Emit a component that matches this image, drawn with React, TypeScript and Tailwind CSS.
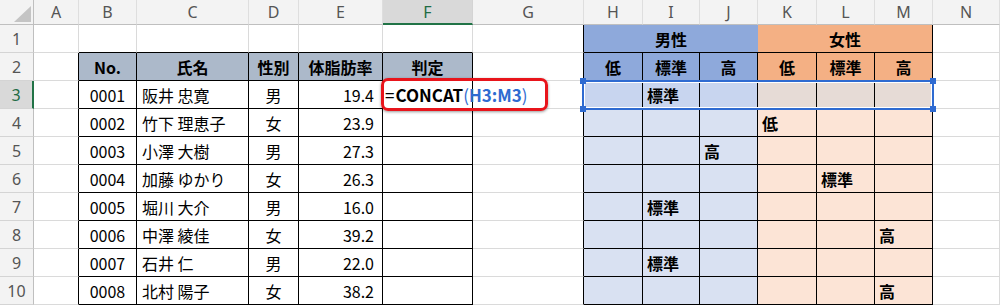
import React from 'react';

const COLS = ['A', 'B', 'C', 'D', 'E', 'F', 'G', 'H', 'I', 'J', 'K', 'L', 'M', 'N'];

// col index of the 判定 mark: H=7 … M=12
const people = [
  { no: '0001', name: '阪井 忠寛', sex: '男', fat: '19.4', col: 8, mark: '標準' },
  { no: '0002', name: '竹下 理恵子', sex: '女', fat: '23.9', col: 10, mark: '低' },
  { no: '0003', name: '小澤 大樹', sex: '男', fat: '27.3', col: 9, mark: '高' },
  { no: '0004', name: '加藤 ゆかり', sex: '女', fat: '26.3', col: 11, mark: '標準' },
  { no: '0005', name: '堀川 大介', sex: '男', fat: '16.0', col: 8, mark: '標準' },
  { no: '0006', name: '中澤 綾佳', sex: '女', fat: '39.2', col: 12, mark: '高' },
  { no: '0007', name: '石井 仁', sex: '男', fat: '22.0', col: 8, mark: '標準' },
  { no: '0008', name: '北村 陽子', sex: '女', fat: '38.2', col: 12, mark: '高' },
];

const tableHead = ['No.', '氏名', '性別', '体脂肪率', '判定'];
const levels = ['低', '標準', '高'];

const blackRight = (r: number, c: number) => {
  if (c <= 5) return r >= 2;
  if (c === 6) return true;
  if (c <= 12) return r >= 2;
  return false;
};
const blackBottom = (c: number) => (c >= 1 && c <= 5) || (c >= 7 && c <= 12);

const fill = (r: number, c: number) => {
  if (r === 2) {
    if (c >= 1 && c <= 5) return 'bg-[#acb9ca]';
    if (c >= 7 && c <= 9) return 'bg-[#8ea9db]';
    if (c >= 10 && c <= 12) return 'bg-[#f4b084]';
  }
  if (r === 3) {
    if (c >= 7 && c <= 9) return 'bg-[#c8d5ef]';
    if (c >= 10 && c <= 12) return 'bg-[#e6dbd6]';
  }
  if (r >= 4) {
    if (c >= 7 && c <= 9) return 'bg-[#d9e1f2]';
    if (c >= 10 && c <= 12) return 'bg-[#fce4d6]';
  }
  return 'bg-white';
};

const align = (r: number, c: number) => {
  if (r === 2) return 'justify-center font-bold';
  if (c === 2) return 'justify-start pl-[5px]';
  if (c === 4) return 'justify-end pr-[8px]';
  if (c === 5) return 'justify-start';
  if (c >= 7) return 'justify-start pl-[4px] font-bold';
  return 'justify-center';
};

function Formula() {
  return (
    <span className="relative z-10 pl-[2px] whitespace-nowrap text-[17px] text-black">
      =<span className="ml-[1px] font-bold">CONCAT</span>
      <span className="text-[#2f6bd1]">(</span>
      <span className="font-bold text-[#2f6bd1]">H3:M3</span>
      <span className="text-[#2f6bd1]">)</span>
    </span>
  );
}

function content(r: number, c: number) {
  if (r === 2) {
    if (c >= 1 && c <= 5) return tableHead[c - 1];
    if (c >= 7 && c <= 12) return levels[(c - 7) % 3];
    return null;
  }
  const p = people[r - 3];
  if (c === 1) return p.no;
  if (c === 2) return p.name;
  if (c === 3) return p.sex;
  if (c === 4) return p.fat;
  if (c === 5 && r === 3) return <Formula />;
  if (c === p.col) return p.mark;
  return null;
}

function RowHeader({ n }: { n: number }) {
  const active = n === 3;
  return (
    <div
      className={
        active
          ? 'flex items-center justify-center border-b border-b-[#d4d4d4] border-r-2 border-r-[#217346] bg-[#d9d9d9] text-[#1e6b44]'
          : 'flex items-center justify-center border-b border-b-[#d4d4d4] border-r border-r-[#bfbfbf] bg-[#f3f3f3] text-[#555]'
      }
    >
      <span className="font-['Noto_Sans','Liberation_Sans',sans-serif] text-[16px]">{n}</span>
    </div>
  );
}

export default function App() {
  const rows = [3, 4, 5, 6, 7, 8, 9, 10];

  return (
    <div className="relative h-[306px] w-[1000px] overflow-hidden bg-white font-['Noto_Sans_CJK_JP',sans-serif] text-[16px] leading-[20px] text-black">
      <div className="grid grid-cols-[34px_45px_58px_112px_50px_84px_90px_111px_59px_57px_58px_59px_58px_58px_1fr] grid-rows-[25px_repeat(10,28px)]">
        {/* corner */}
        <div className="relative border-b border-r border-b-[#bfbfbf] border-r-[#bfbfbf] bg-[#f3f3f3]">
          <svg className="absolute right-[2px] bottom-[2px]" width="17" height="16" viewBox="0 0 17 16">
            <polygon points="17,0 17,16 0,16" fill="#c4c4c4" />
          </svg>
        </div>
        {COLS.map((l) => (
          <div
            key={l}
            className={
              l === 'F'
                ? 'flex items-center justify-center border-b-2 border-r border-b-[#217346] border-r-[#d4d4d4] bg-[#d9d9d9] text-[#1e6b44]'
                : 'flex items-center justify-center border-b border-r border-b-[#bfbfbf] border-r-[#dedede] bg-[#f3f3f3] text-[#555]'
            }
          >
            <span className="font-['Noto_Sans','Liberation_Sans',sans-serif] text-[16px]">{l}</span>
          </div>
        ))}

        {/* row 1: merged 男性 / 女性 */}
        <RowHeader n={1} />
        {COLS.slice(0, 7).map((l, c) => (
          <div
            key={l}
            className={`border-r border-b ${c === 6 ? 'border-r-black' : 'border-r-[#dadada]'} ${
              blackBottom(c) ? 'border-b-black' : 'border-b-[#dadada]'
            }`}
          />
        ))}
        <div className="col-span-3 flex items-center justify-center border-b border-b-black bg-[#8ea9db] font-bold">男性</div>
        <div className="col-span-3 flex items-center justify-center border-r border-b border-r-black border-b-black bg-[#f4b084] font-bold">
          女性
        </div>
        <div className="border-r border-b border-r-[#dadada] border-b-[#dadada]" />

        {/* rows 2–10 */}
        {[2, ...rows].map((r) => (
          <React.Fragment key={r}>
            <RowHeader n={r} />
            {COLS.map((l, c) => (
              <div
                key={l}
                className={`flex items-center border-r border-b ${blackRight(r, c) ? 'border-r-black' : 'border-r-[#dadada]'} ${
                  blackBottom(c) ? 'border-b-black' : 'border-b-[#dadada]'
                } ${fill(r, c)} ${align(r, c)}`}
              >
                {content(r, c)}
              </div>
            ))}
          </React.Fragment>
        ))}
      </div>

      {/* range highlight for H3:M3 */}
      <div className="absolute left-[582px] top-[80px] h-[30px] w-[352px] border-2 border-[#2f6bd1] shadow-[inset_0_0_0_1px_#ffffff]">
        <span className="absolute -left-[4px] -top-[4px] h-[6px] w-[6px] bg-[#2f6bd1]" />
        <span className="absolute -right-[4px] -top-[4px] h-[6px] w-[6px] bg-[#2f6bd1]" />
        <span className="absolute -left-[4px] -bottom-[4px] h-[6px] w-[6px] bg-[#2f6bd1]" />
        <span className="absolute -right-[4px] -bottom-[4px] h-[6px] w-[6px] bg-[#2f6bd1]" />
      </div>

      {/* callout around the formula */}
      <div className="absolute left-[381px] top-[78px] h-[33px] w-[167px] rounded-[7px] border-[3px] border-[#e8141b] shadow-[0_1px_3px_rgba(0,0,0,0.4)]" />
    </div>
  );
}
